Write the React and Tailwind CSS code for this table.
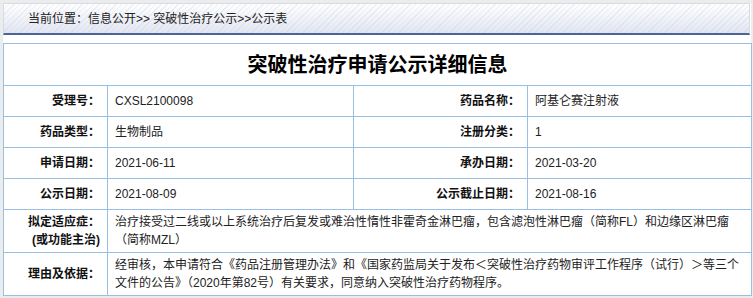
import React from "react";

const rows = [
  ["受理号：", "CXSL2100098", "药品名称：", "阿基仑赛注射液"],
  ["药品类型：", "生物制品", "注册分类：", "1"],
  ["申请日期：", "2021-06-11", "承办日期：", "2021-03-20"],
  ["公示日期：", "2021-08-09", "公示截止日期：", "2021-08-16"],
];

const labelCls =
  "border border-[#99bfe5] text-right pr-[7px] font-bold text-[#111] align-middle";
const valueCls = "border border-[#99bfe5] text-left pl-[7px] text-[#222] align-middle";

const App = () => {
  return (
    <div className="w-[753px] h-[298px] bg-[#ececec] pl-[3px] pt-[3px] overflow-hidden font-['Liberation_Sans','Noto_Sans_CJK_SC',sans-serif] text-[12px]">
      <div className="w-[748px] bg-white">
        <div className="h-[32px] border-t border-l border-r border-[#d5dce7] border-b-2 border-b-[#4d6399] bg-[image:repeating-linear-gradient(135deg,rgba(255,255,255,0)_0px,rgba(255,255,255,0)_3px,rgba(190,200,222,0.28)_3px,rgba(190,200,222,0.28)_4px),linear-gradient(to_bottom,#ffffff,#e2e6f1)] flex items-center pl-[24px] text-[#222] mr-[1px]">
          当前位置：信息公开&gt;&gt; 突破性治疗公示&gt;&gt;公示表
        </div>
        <div className="h-[8px]" />
        <table className="w-[748px] border-collapse table-fixed">
          <colgroup>
            <col className="w-[104px]" />
            <col className="w-[246px]" />
            <col className="w-[174px]" />
            <col className="w-[224px]" />
          </colgroup>
          <tbody>
            <tr className="h-[42px]">
              <td
                colSpan={4}
                className="border border-[#99bfe5] text-center text-[20px] font-bold text-black"
              >
                突破性治疗申请公示详细信息
              </td>
            </tr>
            {rows.map((r) => (
              <tr key={r[0]} className="h-[31px]">
                <td className={labelCls}>{r[0]}</td>
                <td className={valueCls}>{r[1]}</td>
                <td className={labelCls}>{r[2]}</td>
                <td className={valueCls}>{r[3]}</td>
              </tr>
            ))}
            <tr className="h-[43px]">
              <td className={labelCls + " leading-[18px]"}>
                拟定适应症：
                <br />
                (或功能主治)
              </td>
              <td colSpan={3} className={valueCls + " leading-[18px] pr-[7px]"}>
                治疗接受过二线或以上系统治疗后复发或难治性惰性非霍奇金淋巴瘤，包含滤泡性淋巴瘤（简称FL）和边缘区淋巴瘤（简称MZL）
              </td>
            </tr>
            <tr className="h-[43px]">
              <td className={labelCls}>理由及依据：</td>
              <td colSpan={3} className={valueCls + " leading-[18px] pr-[7px]"}>
                经审核，本申请符合《药品注册管理办法》和《国家药监局关于发布＜突破性治疗药物审评工作程序（试行）＞等三个文件的公告》（2020年第82号）有关要求，同意纳入突破性治疗药物程序。
              </td>
            </tr>
          </tbody>
        </table>
      </div>
    </div>
  );
};

export default App;
